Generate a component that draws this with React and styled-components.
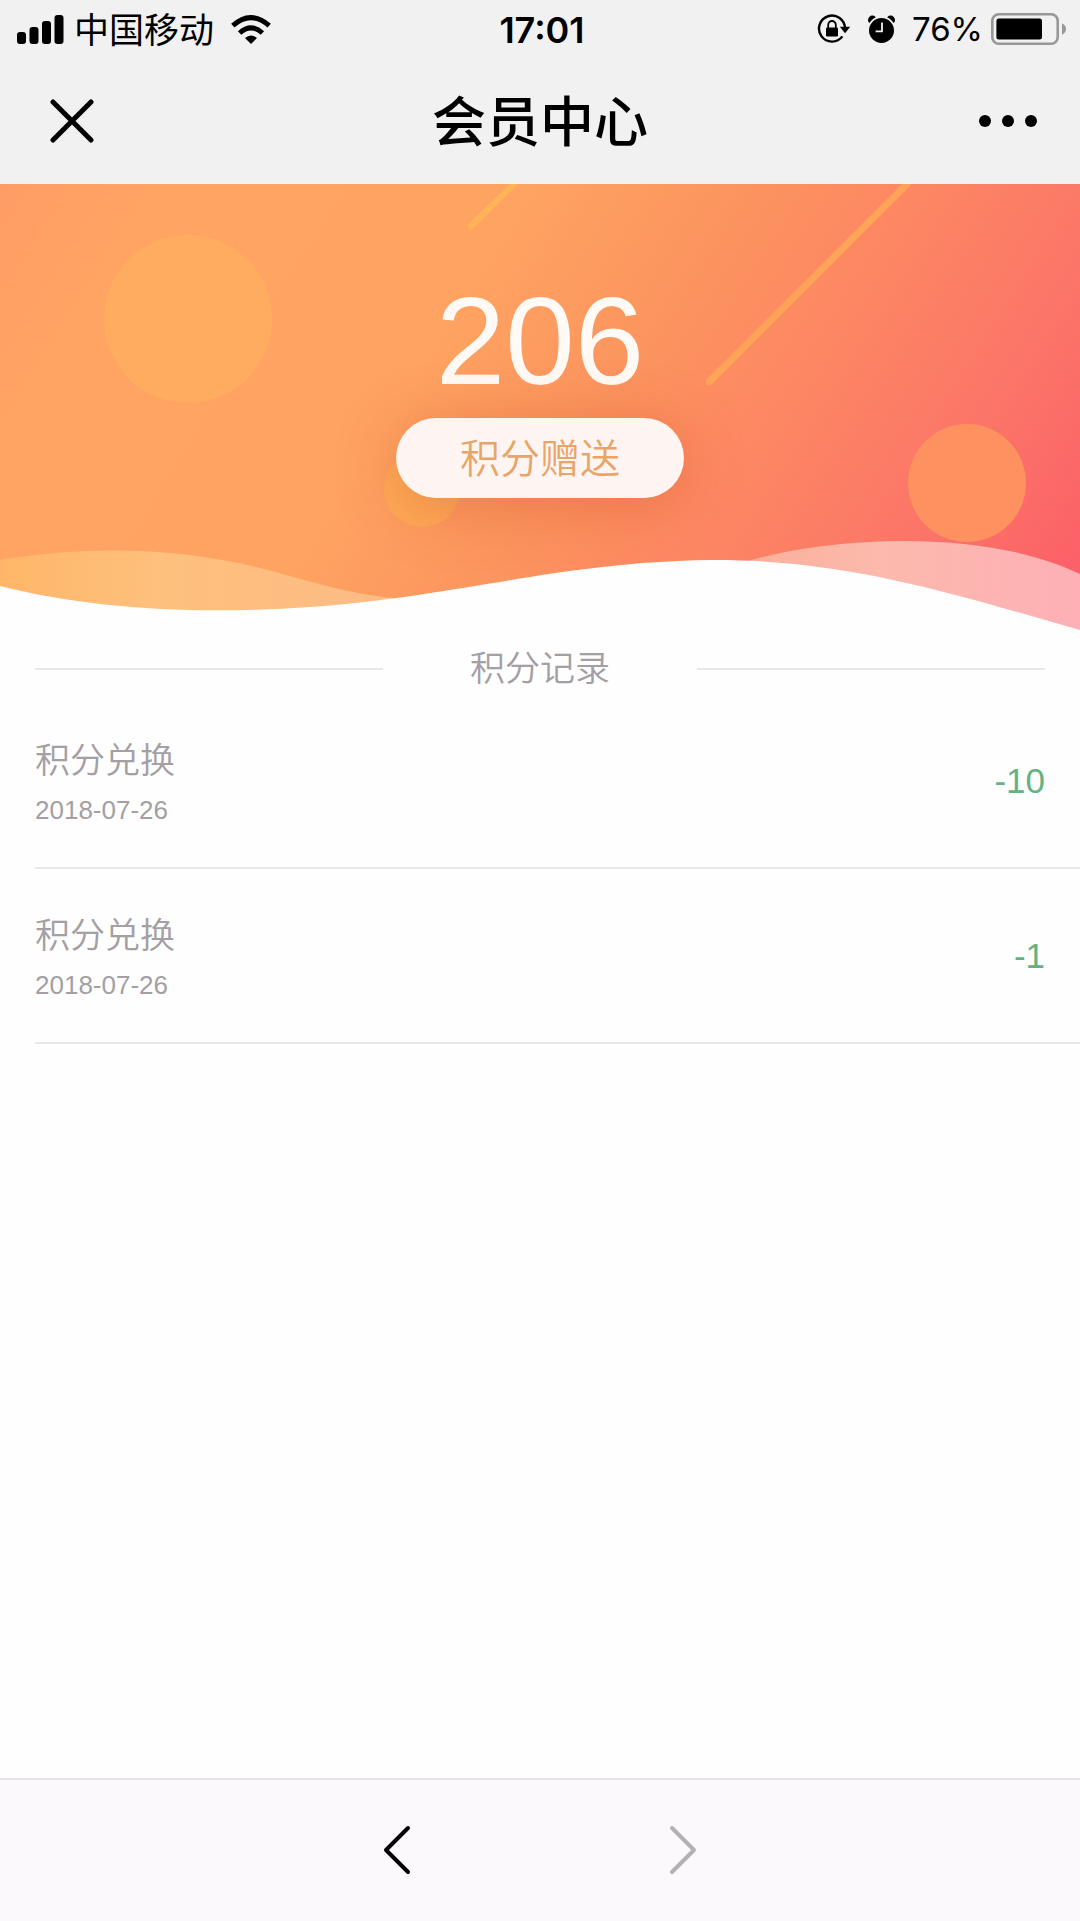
import React from 'react'
import styled, { createGlobalStyle, ThemeProvider } from 'styled-components'

const theme = {
    colors: {
        bar: '#f1f1f1',
        page: '#fefefe',
        toolbar: '#fbf9fc',
        line: '#e8e8e8',
        muted: '#a39fa4',
        spend: '#62b382',
        accent: '#e9a468',
    },
    fonts: {
        base: '"Liberation Sans", "Noto Sans CJK SC", sans-serif',
        system: 'Inter, "Noto Sans CJK SC", sans-serif',
    },
}

const records = [
    { id: 1, title: '积分兑换', date: '2018-07-26', amount: '-10' },
    { id: 2, title: '积分兑换', date: '2018-07-26', amount: '-1' },
]

export default function App() {
    return (
        <ThemeProvider theme={theme}>
            <GlobalStyle />
            <Page>
                <Header>
                    <StatusBar>
                        <StatusGroup>
                            <SignalIcon />
                            <Carrier>中国移动</Carrier>
                            <WifiIcon />
                        </StatusGroup>
                        <Time>17:01</Time>
                        <StatusGroup $end>
                            <LockIcon />
                            <AlarmIcon />
                            <Battery>
                                76%
                                <BatteryIcon />
                            </Battery>
                        </StatusGroup>
                    </StatusBar>
                    <NavBar>
                        <IconButton aria-label="关闭">
                            <CloseIcon />
                        </IconButton>
                        <Title>会员中心</Title>
                        <IconButton aria-label="更多" $end>
                            <MoreIcon />
                        </IconButton>
                    </NavBar>
                </Header>
                <Main>
                    <Banner>
                        <BannerArt />
                        <Points>206</Points>
                        <GiftButton>积分赠送</GiftButton>
                    </Banner>
                    <SectionTitle>积分记录</SectionTitle>
                    <List>
                        {records.map(item => (
                            <Record key={item.id}>
                                <div>
                                    <RecordName>{item.title}</RecordName>
                                    <RecordDate>{item.date}</RecordDate>
                                </div>
                                <Amount>{item.amount}</Amount>
                            </Record>
                        ))}
                    </List>
                </Main>
                <Toolbar>
                    <PageButton aria-label="后退">
                        <ChevronIcon d="M25 3L3 25L25 47" />
                    </PageButton>
                    <PageButton aria-label="前进" disabled>
                        <ChevronIcon d="M3 3L25 25L3 47" />
                    </PageButton>
                </Toolbar>
            </Page>
        </ThemeProvider>
    )
}

function SignalIcon() {
    return (
        <svg width="47" height="29" viewBox="0 0 47 29">
            <rect x="0" y="17" width="9" height="12" rx="3" />
            <rect x="12.5" y="12" width="9" height="17" rx="3" />
            <rect x="25" y="6" width="9" height="23" rx="3" />
            <rect x="37.5" y="0" width="9" height="29" rx="3" />
        </svg>
    )
}

function WifiIcon() {
    return (
        <svg width="40" height="29" viewBox="0 0 40 29" fill="none" stroke="#000" strokeWidth="5">
            <path d="M1.8 10.6Q20 -5.4 38.2 10.6" />
            <path d="M8.6 18Q20 7.6 31.4 18" />
            <path d="M20 29L14 23Q20 18 26 23Z" fill="#000" stroke="none" />
        </svg>
    )
}

function LockIcon() {
    return (
        <svg width="34" height="34" viewBox="0 0 34 34" fill="none" stroke="#000">
            <path d="M28 16.5A13 13 0 1 0 25.4 24.4" strokeWidth="2.4" />
            <path d="M22.8 14.8H33.2L28 21.2Z" fill="#000" stroke="none" />
            <rect x="9" y="15.6" width="12" height="8.8" rx="1" fill="#000" stroke="none" />
            <path d="M11.2 16V12.8a3.8 3.8 0 0 1 7.6 0V16" strokeWidth="1.8" />
        </svg>
    )
}

function AlarmIcon() {
    return (
        <svg width="29" height="31" viewBox="0 0 29 31">
            <circle cx="5.4" cy="6" r="4.4" />
            <circle cx="23.6" cy="6" r="4.4" />
            <circle cx="14.5" cy="16.5" r="13.4" fill="#000" stroke="#f1f1f1" strokeWidth="1.8" />
            <path d="M15 8.4V17.4H8.6" fill="none" stroke="#f1f1f1" strokeWidth="1.8" />
        </svg>
    )
}

function BatteryIcon() {
    return (
        <svg width="76" height="32" viewBox="0 0 76 32">
            <rect x="1.3" y="1.3" width="65.4" height="29.4" rx="6.5" fill="none" stroke="#979797" strokeWidth="2.6" />
            <rect x="5.4" y="5.4" width="45.6" height="21.2" rx="2.5" />
            <path d="M71 10.2Q75 12.4 75 16T71 21.8Z" fill="#979797" />
        </svg>
    )
}

function CloseIcon() {
    return (
        <svg width="44" height="44" viewBox="0 0 44 44" stroke="#000" strokeWidth="5" strokeLinecap="round">
            <path d="M3 3L41 41M41 3L3 41" />
        </svg>
    )
}

function MoreIcon() {
    return (
        <svg width="58" height="12" viewBox="0 0 58 12">
            <circle cx="6" cy="6" r="6" />
            <circle cx="29" cy="6" r="6" />
            <circle cx="52" cy="6" r="6" />
        </svg>
    )
}

function ChevronIcon({ d }) {
    return (
        <svg width="28" height="50" viewBox="0 0 28 50" fill="none" stroke="currentColor" strokeWidth="4" strokeLinecap="round" strokeLinejoin="round">
            <path d={d} />
        </svg>
    )
}

function BannerArt() {
    return (
        <Art viewBox="0 0 1080 446" preserveAspectRatio="none" aria-hidden="true">
            <defs>
                <linearGradient id="sky" gradientUnits="userSpaceOnUse" x1="0" y1="0" x2="960" y2="599">
                    <stop offset="0" stopColor="#ff9c66" />
                    <stop offset="0.12" stopColor="#ffa463" />
                    <stop offset="0.4" stopColor="#fea361" />
                    <stop offset="0.56" stopColor="#fc945f" />
                    <stop offset="0.69" stopColor="#fd8763" />
                    <stop offset="0.86" stopColor="#fb7468" />
                    <stop offset="1" stopColor="#fc5e68" />
                </linearGradient>
                <linearGradient id="waveLeft" x1="0" y1="0" x2="1" y2="0">
                    <stop offset="0" stopColor="#ffb668" />
                    <stop offset="0.4" stopColor="#fec07d" />
                    <stop offset="1" stopColor="#fdbb84" />
                </linearGradient>
                <linearGradient id="waveRight" x1="0" y1="0" x2="1" y2="0">
                    <stop offset="0" stopColor="#fbb09a" />
                    <stop offset="0.4" stopColor="#fcb9ac" />
                    <stop offset="1" stopColor="#feb0b6" />
                </linearGradient>
            </defs>
            <rect width="1080" height="446" fill="url(#sky)" />
            <circle cx="188" cy="135" r="84" fill="#ffb060" fillOpacity="0.65" />
            <circle cx="422" cy="305" r="38" fill="#fdac55" fillOpacity="0.8" />
            <circle cx="967" cy="299" r="59" fill="#fd9160" />
            <path d="M471 42L514 0" stroke="#ffb455" strokeWidth="6" strokeLinecap="round" />
            <path d="M709 198L907 0" stroke="#ffa358" strokeWidth="7" strokeLinecap="round" />
            <path d="M0 376C95 360 185 365 260 384C310 397 345 409 392 414L392 446H0Z" fill="url(#waveLeft)" />
            <path d="M745 378C830 352 985 344 1080 390V446H745Z" fill="url(#waveRight)" />
            <path d="M0 402C90 425 200 431 310 423C460 412 560 378 710 376C850 375 960 412 1080 446H0Z" fill="#fefefe" />
        </Art>
    )
}

const GlobalStyle = createGlobalStyle`
    * {
        box-sizing: border-box;
    }
    body {
        margin: 0;
        font-family: ${theme.fonts.base};
        background-color: ${theme.colors.page};
    }
    h1, h2, p, ul {
        margin: 0;
        padding: 0;
        font-weight: 400;
    }
    button {
        border: none;
        padding: 0;
        background: none;
        font-family: inherit;
        cursor: pointer;
    }
    svg {
        display: block;
        flex-shrink: 0;
    }
`
const Page = styled.div`
    display: flex;
    flex-direction: column;
    min-height: 100vh;
`
const Header = styled.header`
    background-color: ${props => props.theme.colors.bar};
`
const StatusBar = styled.div`
    display: grid;
    grid-template-columns: 1fr auto 1fr;
    align-items: center;
    height: 58px;
    padding: 0 13px 0 17px;
    font-family: ${props => props.theme.fonts.system};
    font-size: 35px;
    line-height: 42px;
`
const StatusGroup = styled.div`
    display: flex;
    align-items: center;
    justify-content: ${props => (props.$end ? 'flex-end' : 'flex-start')};
    gap: ${props => (props.$end ? '16px' : '10px')};
`
const Carrier = styled.span`
    margin-right: 7px;
    padding-top: 2px;
`
const Time = styled.span`
    padding-top: 2px;
    font-size: 36px;
    font-weight: 600;
`
const Battery = styled.span`
    display: flex;
    align-items: center;
    gap: 8px;
    font-size: 33px;
`
const NavBar = styled.nav`
    display: grid;
    grid-template-columns: 1fr auto 1fr;
    align-items: center;
    height: 126px;
    padding: 0 43px;
`
const IconButton = styled.button`
    display: flex;
    align-items: center;
    justify-self: ${props => (props.$end ? 'end' : 'start')};
    height: 58px;
    padding-left: 7px;
`
const Title = styled.h1`
    padding-top: 4px;
    font-size: 54px;
    font-weight: 500;
    line-height: 64px;
`
const Main = styled.main`
    flex: 1;
`
const Banner = styled.section`
    position: relative;
    display: flex;
    flex-direction: column;
    align-items: center;
    height: 446px;
    padding-top: 84px;
`
const Art = styled.svg`
    position: absolute;
    inset: 0;
    width: 100%;
    height: 100%;
`
const Points = styled.p`
    position: relative;
    margin-bottom: 4px;
    color: #fffaf5;
    font-size: 125px;
    line-height: 146px;
`
const GiftButton = styled.button`
    position: relative;
    width: 288px;
    height: 80px;
    padding-top: 2px;
    border-radius: 40px;
    background-color: #fef5f2;
    box-shadow: 0 8px 60px rgba(200, 70, 30, 0.35);
    color: ${props => props.theme.colors.accent};
    font-size: 40px;
    font-weight: 350;
    line-height: 78px;
`
const SectionTitle = styled.h2`
    display: grid;
    grid-template-columns: 1fr auto 1fr;
    align-items: center;
    gap: 87px;
    padding: 14px 35px 0;
    color: ${props => props.theme.colors.muted};
    font-size: 35px;
    font-weight: 350;
    line-height: 50px;
    &:before, &:after {
        content: "";
        height: 2px;
        background-color: ${props => props.theme.colors.line};
    }
`
const List = styled.ul`
    padding-left: 35px;
    list-style: none;
`
const Record = styled.li`
    display: flex;
    align-items: center;
    justify-content: space-between;
    height: 175px;
    padding-right: 35px;
    border-bottom: 2px solid ${props => props.theme.colors.line};
`
const RecordName = styled.p`
    color: ${props => props.theme.colors.muted};
    font-size: 35px;
    font-weight: 350;
    line-height: 58px;
`
const RecordDate = styled.p`
    color: ${props => props.theme.colors.muted};
    font-size: 26px;
    line-height: 40px;
`
const Amount = styled.span`
    color: ${props => props.theme.colors.spend};
    font-size: 35px;
    line-height: 40px;
`
const Toolbar = styled.footer`
    display: flex;
    align-items: center;
    justify-content: center;
    gap: 226px;
    height: 143px;
    padding-bottom: 2px;
    border-top: 2px solid #e7e5e9;
    background-color: ${props => props.theme.colors.toolbar};
`
const PageButton = styled.button`
    display: flex;
    align-items: center;
    justify-content: center;
    width: 60px;
    height: 60px;
    color: #000;
    &:disabled {
        color: #b2b1b4;
        cursor: default;
    }
`
